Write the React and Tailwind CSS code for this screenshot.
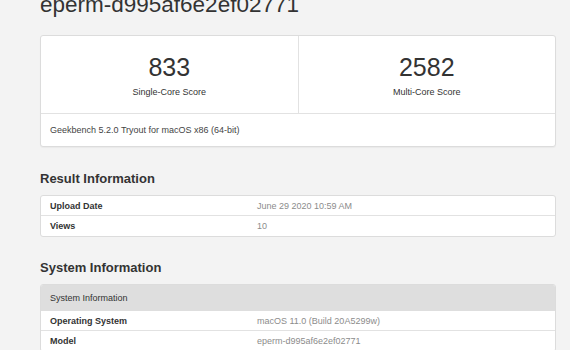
import React from 'react';

const font = { fontFamily: '"Liberation Sans", Arial, sans-serif' };

const InfoRow = ({ label, value, last }) => (
  <div className={`flex items-center h-[20px] pl-[9px] ${last ? '' : 'border-b border-[#e2e2e2]'}`}>
    <div className="w-[207px] text-[9px] leading-[12px] font-bold text-[#333]">{label}</div>
    <div className="text-[9px] leading-[12px] text-[#8c8c8c]">{value}</div>
  </div>
);

const Score = ({ value, label, divider }) => (
  <div className={`flex-1 flex flex-col items-center pt-[16px] pb-[15px] ${divider ? 'border-r border-[#e2e2e2]' : ''}`}>
    <div className="text-[25px] leading-[30px] text-[#333]">{value}</div>
    <div className="mt-[4px] text-[9px] leading-[12px] text-[#333]">{label}</div>
  </div>
);

export default function App() {
  return (
    <div className="w-[570px] h-[350px] overflow-hidden bg-[#f3f3f3] pl-[40px] pr-[14px]" style={font}>
      <h1 className="mt-[-8px] text-[22.5px] leading-[26px] text-[#333]">eperm-d995af6e2ef02771</h1>

      {/* scores */}
      <div className="mt-[17px] bg-white border border-[#dcdcdc] rounded-[3px] shadow-[0_1px_1px_rgba(0,0,0,0.04)]">
        <div className="flex border-b border-[#e2e2e2]">
          <Score value="833" label="Single-Core Score" divider />
          <Score value="2582" label="Multi-Core Score" />
        </div>
        <div className="px-[9px] py-[10px] text-[9px] leading-[12px] text-[#444]">
          Geekbench 5.2.0 Tryout for macOS x86 (64-bit)
        </div>
      </div>

      {/* result info */}
      <h2 className="mt-[24px] text-[13px] leading-[16px] font-bold text-[#333]">Result Information</h2>
      <div className="mt-[8px] bg-white border border-[#dcdcdc] rounded-[3px] overflow-hidden">
        <InfoRow label="Upload Date" value="June 29 2020 10:59 AM" />
        <InfoRow label="Views" value="10" last />
      </div>

      {/* system info */}
      <h2 className="mt-[23px] text-[13px] leading-[16px] font-bold text-[#333]">System Information</h2>
      <div className="mt-[8px] bg-white border border-[#dcdcdc] rounded-[3px] overflow-hidden">
        <div className="h-[26px] flex items-center pl-[9px] bg-[#dedede] text-[9px] leading-[12px] text-[#333]">
          System Information
        </div>
        <InfoRow label="Operating System" value="macOS 11.0 (Build 20A5299w)" />
        <InfoRow label="Model" value="eperm-d995af6e2ef02771" last />
      </div>
    </div>
  );
}
